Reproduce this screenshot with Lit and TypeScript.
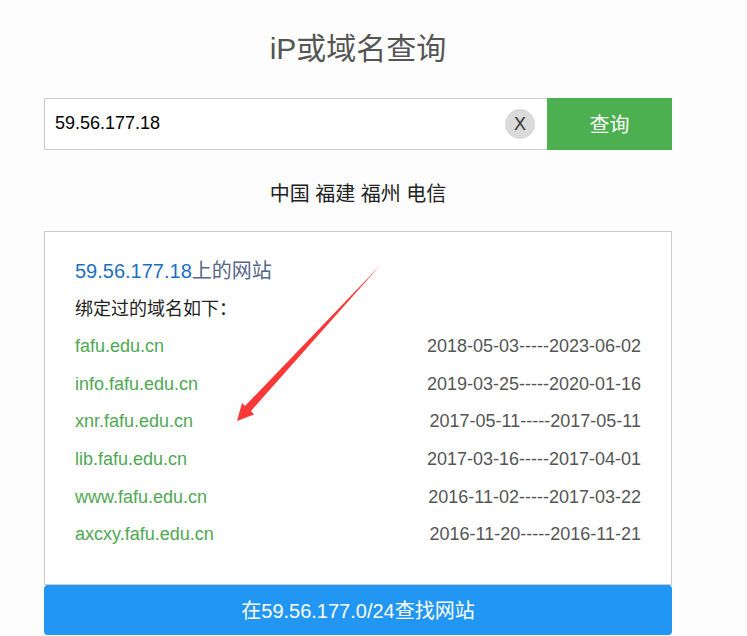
import { LitElement, html, css } from "lit";
import { customElement, property, state } from "lit/decorators.js";

interface Binding {
  domain: string;
  period: string;
}

@customElement("ip-search")
class IpSearch extends LitElement {
  @state() query = "59.56.177.18";

  static styles = css`
    :host {
      display: block;
    }
    .bar {
      display: flex;
      height: 52px;
    }
    .field {
      flex: 1;
      min-width: 0;
      display: flex;
      align-items: center;
      box-sizing: border-box;
      border: 1px solid #ccc;
      border-right: 0;
      background: #fff;
      padding: 0 12px 0 10px;
    }
    .input {
      flex: 1;
      min-width: 0;
      border: 0;
      padding: 0 0 2px;
      outline: none;
      background: none;
      font: inherit;
      font-size: 18px;
      line-height: 24px;
      color: #000;
    }
    .clear {
      width: 30px;
      height: 30px;
      padding: 0;
      border: 0;
      border-radius: 50%;
      background: #dadada;
      color: #333;
      font: inherit;
      font-size: 18px;
      line-height: 30px;
    }
    .submit {
      width: 125px;
      padding: 0 0 2px;
      border: 0;
      background: #4caf50;
      color: #fff;
      font: inherit;
      font-size: 20px;
    }
  `;

  render() {
    return html`
      <form class="bar" @submit=${(e: Event) => e.preventDefault()}>
        <div class="field">
          <input
            class="input"
            type="text"
            aria-label="iP或域名"
            .value=${this.query}
            @input=${(e: Event) => (this.query = (e.target as HTMLInputElement).value)}
          />
          <button class="clear" type="button" aria-label="清除" @click=${() => (this.query = "")}>X</button>
        </div>
        <button class="submit" type="submit">查询</button>
      </form>
    `;
  }
}

@customElement("site-panel")
class SitePanel extends LitElement {
  @property() ip = "";
  @property({ attribute: false }) bindings: Binding[] = [];

  static styles = css`
    :host {
      display: block;
      position: relative;
      box-sizing: border-box;
      border: 1px solid #ccc;
      background: #fff;
      padding: 20px 30px 31px;
      font-size: 18px;
    }
    .title {
      margin: 0;
      font-size: 20px;
      font-weight: 400;
      line-height: 38px;
      color: #566787;
    }
    .ip {
      color: #1b6fc2;
    }
    .table {
      width: 100%;
      height: 263px;
      border-collapse: collapse;
      line-height: 24px;
    }
    .caption,
    .domain,
    .period {
      padding: 0;
      font-weight: 400;
      text-align: left;
    }
    .caption {
      color: #222;
    }
    .period {
      color: #555;
      text-align: right;
    }
    .link {
      color: #4fa853;
      text-decoration: none;
    }
    .arrow {
      position: absolute;
      left: 192px;
      top: 33px;
      pointer-events: none;
    }
  `;

  render() {
    return html`
      <h2 class="title"><span class="ip">${this.ip}</span>上的网站</h2>
      <table class="table">
        <tbody>
          <tr>
            <th class="caption" colspan="2">绑定过的域名如下：</th>
          </tr>
          ${this.bindings.map(
            (b) => html`<tr>
              <td class="domain"><a class="link" href="#${b.domain}">${b.domain}</a></td>
              <td class="period">${b.period}</td>
            </tr>`
          )}
        </tbody>
      </table>
      <svg class="arrow" width="144" height="157" viewBox="0 0 144 157" aria-hidden="true">
        <path d="M143.500 0L14 146L17 149.500L0 156L5 138L8 141Z" fill="#fb3838" />
      </svg>
    `;
  }
}

@customElement("app-root")
class AppRoot extends LitElement {
  private bindings: Binding[] = [
    { domain: "fafu.edu.cn", period: "2018-05-03-----2023-06-02" },
    { domain: "info.fafu.edu.cn", period: "2019-03-25-----2020-01-16" },
    { domain: "xnr.fafu.edu.cn", period: "2017-05-11-----2017-05-11" },
    { domain: "lib.fafu.edu.cn", period: "2017-03-16-----2017-04-01" },
    { domain: "www.fafu.edu.cn", period: "2016-11-02-----2017-03-22" },
    { domain: "axcxy.fafu.edu.cn", period: "2016-11-20-----2016-11-21" },
  ];

  static styles = css`
    :host {
      display: block;
      box-sizing: border-box;
      min-height: 100vh;
      padding: 28px 75px 0 44px;
      background: #fdfdfd;
      color: #222;
      font-family: "Liberation Sans", "Noto Sans CJK SC", sans-serif;
    }
    .heading {
      margin: 0 0 28px;
      font-size: 30px;
      font-weight: 400;
      line-height: 42px;
      text-align: center;
      color: #555;
    }
    .place {
      margin: 28px 0 21px;
      font-size: 20px;
      line-height: 32px;
      text-align: center;
    }
    .range {
      display: block;
      width: 100%;
      height: 50px;
      padding: 0 0 2px;
      border: 0;
      border-radius: 4px;
      background: #2196f3;
      color: #fff;
      font: inherit;
      font-size: 20px;
    }
  `;

  render() {
    return html`
      <h1 class="heading">iP或域名查询</h1>
      <ip-search></ip-search>
      <p class="place">中国 福建 福州 电信</p>
      <site-panel ip="59.56.177.18" .bindings=${this.bindings}></site-panel>
      <button class="range" type="button">在59.56.177.0/24查找网站</button>
    `;
  }
}
